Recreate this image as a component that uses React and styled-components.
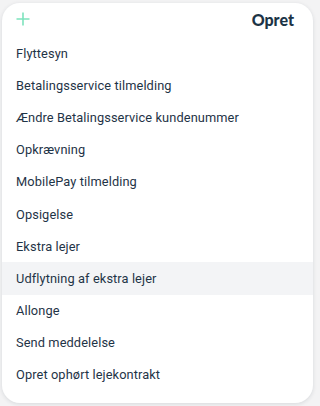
import styled, { createGlobalStyle } from "styled-components";

const GlobalStyle = createGlobalStyle`
  html, body {
    margin: 0;
    padding: 0;
    background: #f3f3f4;
  }
  body {
    font-family: Roboto, "Liberation Sans", sans-serif;
  }
`;

const Page = styled.div`
  width: 317px;
  height: 406px;
  padding: 3px 4px 3px 2px;
  box-sizing: border-box;
`;

const Panel = styled.div`
  background: #fff;
  border-radius: 18px;
  box-shadow: 0 1px 4px rgba(20, 30, 50, 0.12);
  height: 100%;
  overflow: hidden;
`;

const Header = styled.div`
  display: flex;
  align-items: center;
  justify-content: space-between;
  height: 32px;
  padding: 0 19px 0 13px;
`;

const PlusBtn = styled.button`
  border: 0;
  background: none;
  padding: 0;
  width: 16px;
  height: 16px;
  display: flex;
  color: #7ee3bd;
`;

const Title = styled.h2`
  margin: 0;
  font-family: Lato, "Open Sans", sans-serif;
  font-weight: 900;
  font-size: 16px;
  color: #1c3446;
`;

const List = styled.ul`
  list-style: none;
  margin: 2px 0 0;
  padding: 0;
`;

const Item = styled.li`
  height: 32.2px;
  display: flex;
  align-items: center;
  padding-left: 14px;
  font-size: 12.8px;
  letter-spacing: 0.1px;
  color: #1f3447;
  background: ${(p) => (p.active ? "#f3f4f6" : "transparent")};
`;

const items = [
  "Flyttesyn",
  "Betalingsservice tilmelding",
  "Ændre Betalingsservice kundenummer",
  "Opkrævning",
  "MobilePay tilmelding",
  "Opsigelse",
  "Ekstra lejer",
  "Udflytning af ekstra lejer",
  "Allonge",
  "Send meddelelse",
  "Opret ophørt lejekontrakt",
];

export default function App() {
  return (
    <>
      <GlobalStyle />
      <Page>
        <Panel>
          <Header>
            <PlusBtn aria-label="Tilføj">
              <svg width="16" height="16" viewBox="0 0 16 16" fill="none" stroke="currentColor" strokeWidth="1.6">
                <path d="M8 1.5v13M1.5 8h13" />
              </svg>
            </PlusBtn>
            <Title>Opret</Title>
          </Header>
          <List>
            {items.map((t, i) => (
              <Item key={t} active={i === 7}>
                {t}
              </Item>
            ))}
          </List>
        </Panel>
      </Page>
    </>
  );
}
